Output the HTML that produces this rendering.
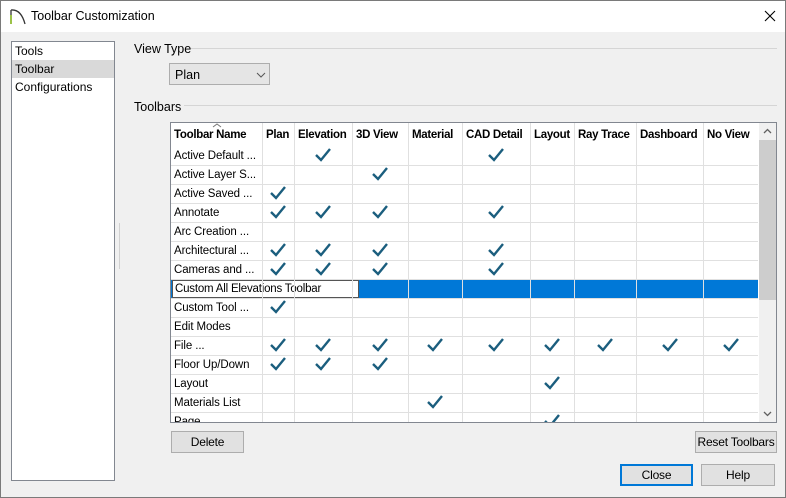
<!DOCTYPE html>
<html><head><meta charset="utf-8"><style>
*{box-sizing:border-box;margin:0;padding:0}
body{width:786px;height:498px;overflow:hidden;font-family:"Liberation Sans",sans-serif;font-size:12px;color:#000;background:#f0f0f0;position:relative}
.win{position:absolute;left:0;top:0;width:786px;height:498px;border:1px solid #7a7a7a;background:#f0f0f0}
.title{position:absolute;left:0;top:0;width:784px;height:31px;background:#fff}
.abs{position:absolute}
.list{left:10px;top:40px;width:104px;height:440px;background:#fff;border:1px solid #828790}
.list div{height:18px;line-height:18px;padding-left:3px;font-size:12px}
.btn{position:absolute;height:22px;background:#e1e1e1;border:1px solid #adadad;text-align:center;line-height:20px;font-size:12px;white-space:nowrap;letter-spacing:-0.2px}
.grid{left:169px;top:121px;width:607px;height:301px;background:#fff;border:1px solid #828790;overflow:hidden}
.vl{position:absolute;top:0;width:1px;height:300px;background:#e0e0e0}
.hl{position:absolute;left:0;width:587px;height:1px;background:#e0e0e0}
.hd{position:absolute;top:6px;font-weight:bold;font-size:11.5px;letter-spacing:-0.3px;white-space:nowrap}
.rn{position:absolute;left:3px;font-size:11.5px;letter-spacing:-0.1px;white-space:nowrap}
.ck{position:absolute;width:18px;height:16px}
</style></head><body><div class="win">
<div class="title">
<svg class="abs" style="left:8px;top:6px" width="18" height="18"><path d="M2 17V3 M2 3 Q12 2 16 17" stroke="#333" stroke-width="1.3" fill="none"/><path d="M2 17V8" stroke="#8fc31f" stroke-width="1.5"/></svg>
<div class="abs" style="left:30px;top:8px;font-size:12.5px">Toolbar Customization</div>
<svg class="abs" style="left:763px;top:9px" width="12" height="12"><path d="M1 1L11 11M11 1L1 11" stroke="#000" stroke-width="1.1"/></svg>
</div>
<div class="abs list"><div>Tools</div><div style="background:#d9d9d9">Toolbar</div><div>Configurations</div></div>
<div class="abs" style="left:118px;top:222px;width:1px;height:46px;background:#d0d0d0"></div>
<div class="abs" style="left:133px;top:41px;font-size:12.5px">View Type</div>
<div class="abs" style="left:190px;top:47px;width:586px;height:1px;background:#d5d5d5"></div>
<div class="abs" style="left:168px;top:62px;width:101px;height:22px;background:#e5e5e5;border:1px solid #adadad;padding:4px 0 0 5px;font-size:12.5px">Plan
<svg class="abs" style="left:86px;top:8px" width="10" height="6"><path d="M1 1L5 5L9 1" stroke="#555" fill="none"/></svg></div>
<div class="abs" style="left:133px;top:99px;font-size:12.5px">Toolbars</div>
<div class="abs" style="left:183px;top:104px;width:593px;height:1px;background:#d5d5d5"></div>
<div class="abs grid" id="g">
<svg class="abs" style="left:41px;top:0" width="10" height="5"><path d="M1 4L5 1L9 4" stroke="#777" fill="none"/></svg>
</div>
<div class="btn" style="left:170px;top:430px;width:73px">Delete</div>
<div class="btn" style="left:694px;top:430px;width:82px">Reset Toolbars</div>
<div class="btn" style="left:619px;top:463px;width:73px;border:2px solid #0078d7;line-height:18px">Close</div>
<div class="btn" style="left:700px;top:463px;width:74px">Help</div>
</div>
<script>
var g=document.getElementById('g');
var cols=[0,91,123,181,237,291,359,403,465,532,587];
var names=["Plan","Elevation","3D View","Material","CAD Detail","Layout","Ray Trace","Dashboard","No View"];
var h='';
h+='<div class="hd" style="left:3px">Toolbar Name</div>';
for(var i=0;i<9;i++){h+='<div class="hd" style="left:'+(cols[i+1]+4)+'px">'+names[i]+'</div>';}
var rows=[["Active Default ...",[1,4]],["Active Layer S...",[2]],["Active Saved ...",[0]],["Annotate",[0,1,2,4]],["Arc Creation ...",[]],["Architectural ...",[0,1,2,4]],["Cameras and ...",[0,1,2,4]],["SEL",[]],["Custom Tool ...",[0]],["Edit Modes",[]],["File ...",[0,1,2,3,4,5,6,7,8]],["Floor Up/Down",[0,1,2]],["Layout",[5]],["Materials List",[3]],["Page",[5]]];
var ck='<svg width="18" height="16"><path d="M2 8L7 13L16 2" stroke="#1b5e7e" stroke-width="2.4" fill="none"/></svg>';
for(var r=0;r<rows.length;r++){
 var y=23+r*19;
 if(rows[r][0]=="SEL"){
  h+='<div class="abs" style="left:0;top:'+(y+1)+'px;width:587px;height:18px;background:#0078d7"></div>';
  h+='<div class="abs" style="left:1px;top:'+(y+1)+'px;width:187px;height:18px;background:#fff;border:1px solid #555;padding:2px 0 0 2px;font-size:11.5px;letter-spacing:-0.2px;white-space:nowrap;overflow:hidden">Custom All Elevations Toolbar</div>';
 } else {
  h+='<div class="rn" style="top:'+(y+4)+'px">'+rows[r][0]+'</div>';
  rows[r][1].forEach(function(c){var cx=(cols[c+1]+cols[c+2])/2;h+='<div class="ck" style="left:'+(cx-9)+'px;top:'+(y+1)+'px">'+ck+'</div>';});
 }
 h+='<div class="hl" style="top:'+(y+19)+'px"></div>';
}
for(var i=1;i<cols.length-1;i++){h+='<div class="vl" style="left:'+cols[i]+'px"></div>';}
h+='<div class="abs" style="left:588px;top:0;width:17px;height:300px;background:#f0f0f0"></div>';
h+='<div class="abs" style="left:588px;top:17px;width:17px;height:160px;background:#cdcdcd"></div>';
h+='<svg class="abs" style="left:592px;top:5px" width="9" height="6"><path d="M1 5L4.5 1.5L8 5" stroke="#606060" stroke-width="1.3" fill="none"/></svg>';
h+='<svg class="abs" style="left:592px;top:288px" width="9" height="6"><path d="M1 1L4.5 4.5L8 1" stroke="#606060" stroke-width="1.3" fill="none"/></svg>';
g.innerHTML+=h;
</script>
</body></html>
